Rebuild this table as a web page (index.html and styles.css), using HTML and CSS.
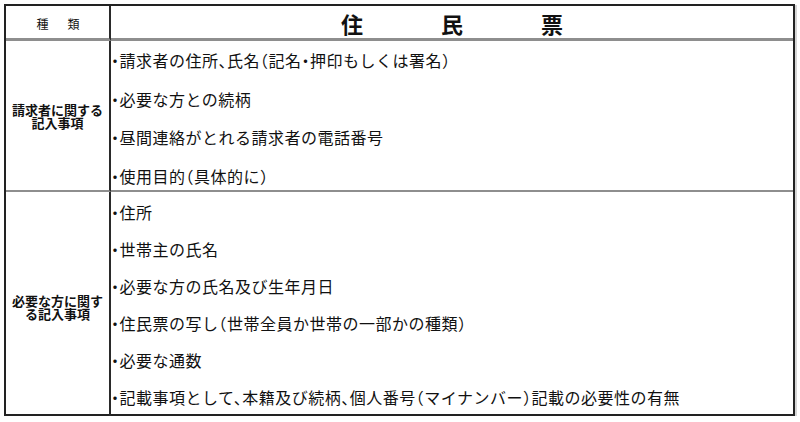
FILE: index.html
```html
<!DOCTYPE html>
<html lang="ja">
<head>
<meta charset="utf-8">
<title>住民票</title>
<link rel="stylesheet" href="styles.css">
</head>
<body>
<div class="sheet">
  <div class="cell head-label"><span>種</span><span>類</span></div>
  <div class="cell head-title"><span>住</span><span>民</span><span>票</span></div>

  <div class="cell label sec1"><span>請求者に関する</span><span>記入事項</span></div>
  <div class="cell items sec1 items1">
    <p>・請求者の住所、氏名（記名・押印もしくは署名）</p>
    <p>・必要な方との続柄</p>
    <p>・昼間連絡がとれる請求者の電話番号</p>
    <p>・使用目的（具体的に）</p>
  </div>

  <div class="cell label sec2 label2"><span>必要な方に関す</span><span>る記入事項</span></div>
  <div class="cell items sec2 items2">
    <p>・住所</p>
    <p>・世帯主の氏名</p>
    <p>・必要な方の氏名及び生年月日</p>
    <p>・住民票の写し（世帯全員か世帯の一部かの種類）</p>
    <p>・必要な通数</p>
    <p>・記載事項として、本籍及び続柄、個人番号（マイナンバー）記載の必要性の有無</p>
  </div>
</div>
</body>
</html>
```
FILE: styles.css
```css
html, body {
  margin: 0;
  padding: 0;
  background: #fff;
}
body {
  font-family: "Noto Sans CJK JP", "Noto Sans", sans-serif;
  color: #111;
}
.sheet {
  margin: 4px 0 0 4px;
  width: 791px;
  height: 412px;
  box-sizing: border-box;
  border: 2px solid #222;
  box-shadow: 2px 1px 0 #d6d6d6;
  display: grid;
  grid-template-columns: 105px 1fr;
  grid-template-rows: 35px 151px 1fr;
}
.cell {
  box-sizing: border-box;
}
.head-label, .label {
  border-right: 2px solid #2a2a2a;
}
.head-label, .head-title {
  border-bottom: 3px solid #8e8e8e;
  display: flex;
  align-items: center;
  justify-content: center;
  padding-top: 3px;
}
.head-label {
  font-size: 12px;
  gap: 19px;
  padding-left: 1px;
}
.head-title {
  font-size: 22px;
  font-weight: 700;
  gap: 78px;
  padding-top: 2px;
}
.sec1 {
  border-bottom: 2px solid #8e8e8e;
}
.label {
  display: flex;
  flex-direction: column;
  align-items: center;
  justify-content: center;
  text-align: center;
  font-size: 13px;
  font-weight: 700;
  line-height: 13px;
  gap: 0;
  padding-top: 1px;
}
.label span {
  display: block;
  white-space: nowrap;
}
.label2 {
  padding-top: 6px;
}
.items p {
  margin: 0;
  font-size: 16px;
  letter-spacing: 0.5px;
  font-feature-settings: "halt";
  white-space: nowrap;
}
.items1 p {
  line-height: 38.5px;
}
.items2 {
  padding-top: 2px;
}
.items2 p {
  line-height: 37px;
}
```
